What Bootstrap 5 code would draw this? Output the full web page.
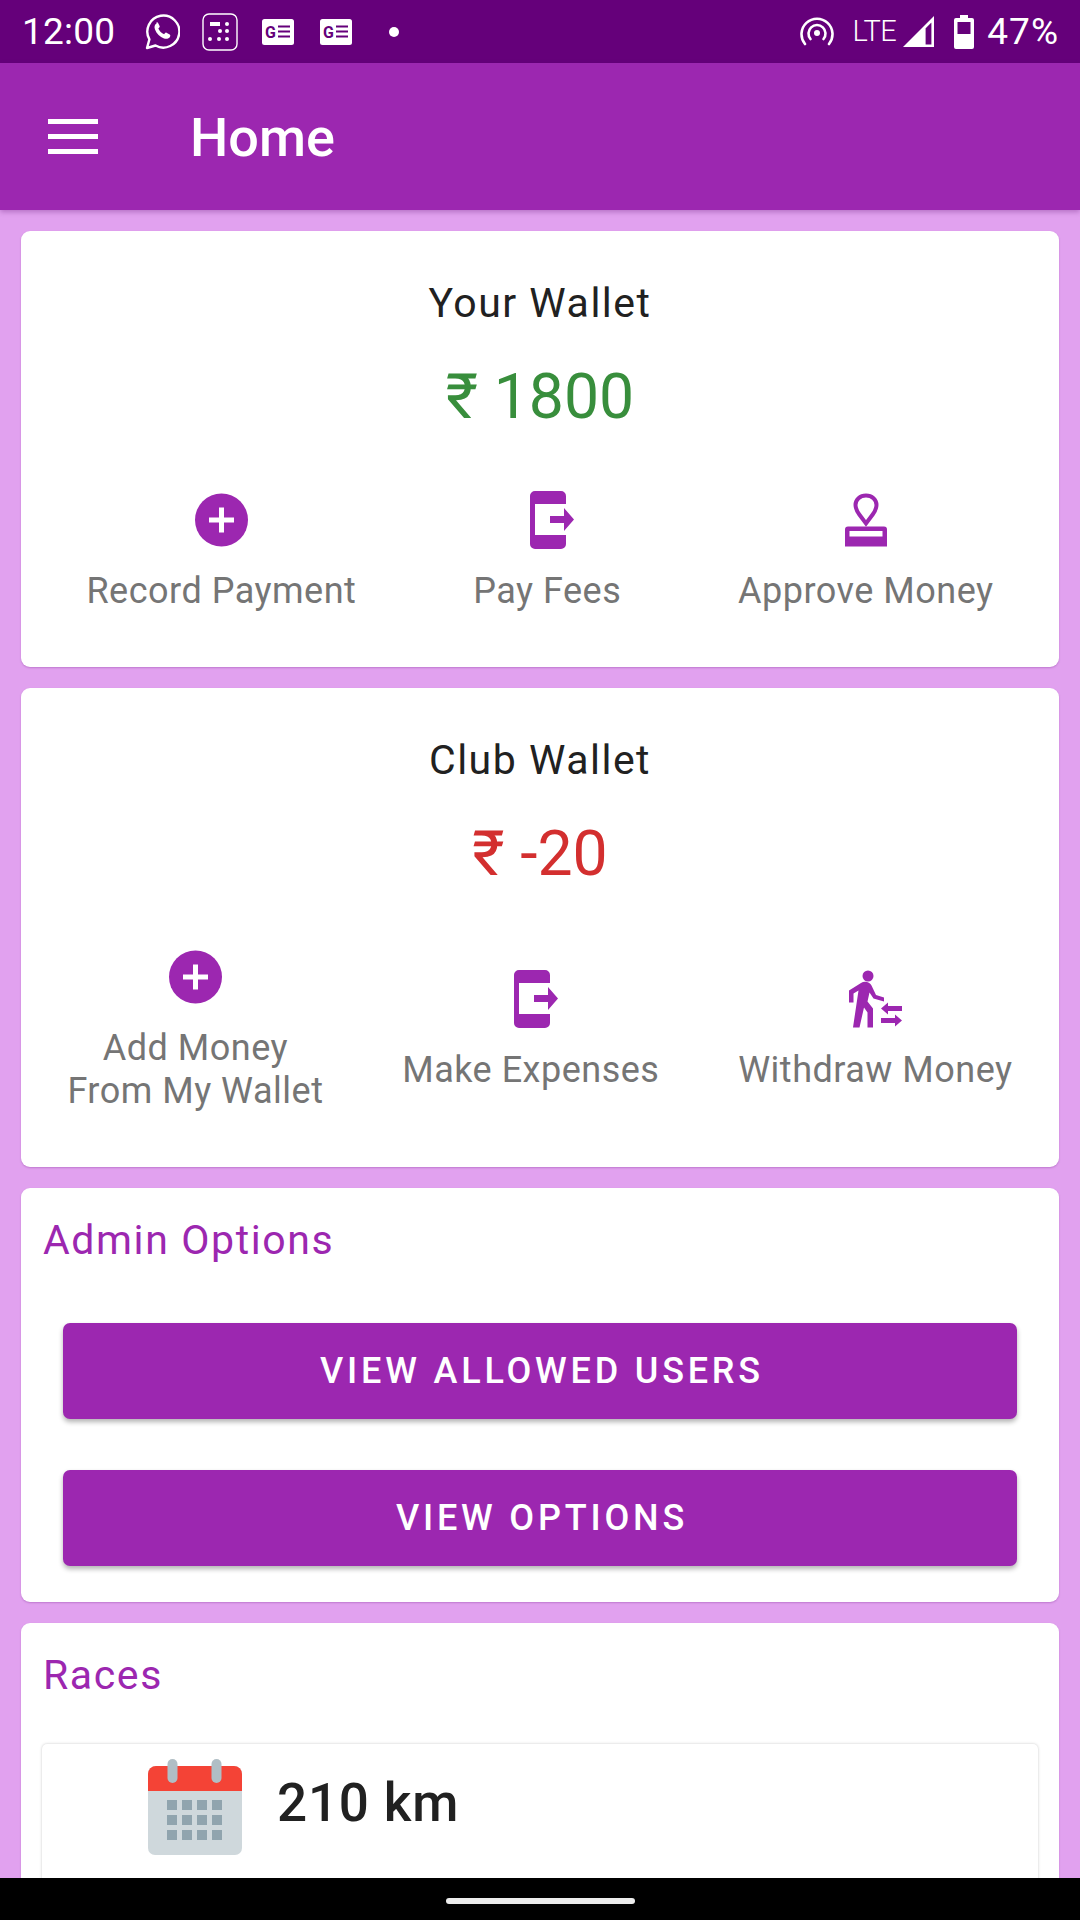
<!DOCTYPE html>
<html lang="en">
<head>
  <meta charset="UTF-8" />
  <meta name="viewport" content="width=device-width, initial-scale=1.0" />
  <title>Home</title>
  <link rel="stylesheet" href="https://cdn.jsdelivr.net/npm/bootstrap@5.3.0/dist/css/bootstrap.min.css">
  <style>
    body { font-family: Roboto, "Liberation Sans", sans-serif; background: #e1a1ef; overflow: hidden; }
    .phone { width: 1080px; height: 1920px; }
    .status-strip { height: 63px; background: #65007a; color: #fff; padding: 0 21px 0 22px; }
    .status-time { font-size: 37px; width: 122px; letter-spacing: .2px; line-height: 1; }
    .status-lte { font-size: 29px; letter-spacing: -.5px; font-weight: 300; line-height: 1; }
    .status-pct { font-size: 37px; letter-spacing: 1px; line-height: 1; }
    .app-strip { height: 147px; background: #9c27b0; color: #fff; padding-left: 48px; box-shadow: 0 2px 5px rgba(80,0,100,.3); position: relative; }
    .app-title { font-size: 54px; font-weight: 500; margin-left: 92px; line-height: 1; padding-top: 3px; }
    .burger { width: 50px; }
    .burger i { display: block; height: 5px; background: #fff; margin: 10px 0; }
    .content-scroll { padding: 21px 21px 0; gap: 21px; overflow: hidden; min-height: 0; }
    .panel { background: #fff; border-radius: 9px; box-shadow: 0 1px 2px rgba(90,0,110,.25); flex-shrink: 0; }
    .wallet-panel { text-align: center; }
    .wallet-title { font-size: 41px; letter-spacing: 1.5px; color: #212121; line-height: 44px; padding-top: 50px; }
    .wallet-sum { font-size: 62.5px; line-height: 70px; margin-top: 37px; }
    .sum-green { color: #388e3c; }
    .sum-red { color: #d32f2f; }
    .action-row { margin-top: 59px; padding: 0 7px 54px; }
    .action-label { font-size: 36px; letter-spacing: .5px; color: #757575; line-height: 43px; }
    .action-icon { height: 58px; display: block; margin: 0 auto 21px; }
    .panel-head { font-size: 41px; letter-spacing: 1.6px; color: #9c27b0; line-height: 44px; }
    .admin-panel { height: 414px; padding: 30px 42px 0 22px; }
    .purple-btn { background: #9c27b0; color: #fff; border: 0; height: 96px; border-radius: 7px; font-size: 36px; font-weight: 500; letter-spacing: 3.8px; width: 954px; margin-left: 20px; padding-left: 16px; box-shadow: 0 3px 5px rgba(0,0,0,.3); }
    .races-panel { padding: 30px 21px 0 21px; height: 420px; }
    .head-nudge { padding-left: 1px; }
    .race-item { margin-top: 47px; height: 320px; border-radius: 5px; box-shadow: 0 0 3px rgba(0,0,0,.22); padding: 15px 0 0 106px; }
    .race-dist { font-size: 53px; font-weight: 500; color: #212121; letter-spacing: .8px; margin-left: 35px; line-height: 1; margin-top: 18px; }
    .bottom-strip { height: 42px; background: #000; position: relative; z-index: 2; }
    .home-handle { width: 189px; height: 6px; border-radius: 3px; background: #ececec; margin-top: 20px; }
    .gap-dial { margin-left: 22px; }
    .gap-news { margin-left: 24px; }
    .gap-news2 { margin-left: 26px; }
    .gap-dot { margin-left: 37px; }
    .gap-hotspot { margin-right: 19px; }
    .gap-signal { margin: 0 19px 0 7px; }
    .gap-battery { margin-right: 13px; }
  </style>
</head>
<body>
  <div class="phone d-flex flex-column">
    <div class="status-strip d-flex align-items-center flex-shrink-0">
      <span class="status-time">12:00</span>
      <!-- whatsapp -->
      <svg width="36" height="38" viewBox="0 0 36 38" fill="none" stroke="#fff" stroke-width="2.4">
        <path d="M3 35l2.4-8.6A16 16 0 1 1 11.500 32.500z" stroke-linejoin="round"/>
        <path d="M12.500 10.500c-2 1-2.500 3.500-1.500 6 1.500 4 5 7.500 9 9 2.500.8 5 .3 6-1.700.5-1 .4-1.800-.3-2.300l-3.200-1.800c-.7-.3-1.200 0-1.600.6l-.8 1c-2.500-1-4.700-3.200-5.800-5.700l1-1c.5-.5.6-1 .3-1.600l-1.500-3c-.4-.8-1-.9-1.600-.5z" fill="#fff" stroke="none"/>
      </svg>
      <!-- dial pad -->
      <svg class="gap-dial" width="36" height="38" viewBox="0 0 36 38" fill="#fff">
        <rect x="1" y="1" width="34" height="36" rx="6" fill="none" stroke="#fff" stroke-width="1.400"/>
        <rect x="8" y="9" width="10" height="4"/>
        <circle cx="25" cy="11" r="2"/><circle cx="18" cy="18" r="2"/><circle cx="25" cy="18" r="2"/>
        <circle cx="8" cy="26" r="2"/><circle cx="17" cy="26" r="2"/><circle cx="25" cy="26" r="2"/>
      </svg>
      <!-- google news -->
      <svg class="gap-news" width="32" height="26" viewBox="0 0 32 26">
        <rect width="32" height="26" rx="2.500" fill="#fff"/>
        <text x="3" y="19" font-family="Roboto, sans-serif" font-size="16" font-weight="700" fill="#65007a">G</text>
        <path d="M16 7.500h12M16 12.500h12M16 17.500h12" stroke="#65007a" stroke-width="2"/>
      </svg>
      <svg class="gap-news2" width="32" height="26" viewBox="0 0 32 26">
        <rect width="32" height="26" rx="2.500" fill="#fff"/>
        <text x="3" y="19" font-family="Roboto, sans-serif" font-size="16" font-weight="700" fill="#65007a">G</text>
        <path d="M16 7.500h12M16 12.500h12M16 17.500h12" stroke="#65007a" stroke-width="2"/>
      </svg>
      <svg class="gap-dot" width="10" height="10" viewBox="0 0 10 10"><circle cx="5" cy="5" r="5" fill="#fff"/></svg>
      <span class="flex-grow-1"></span>
      <!-- hotspot -->
      <svg class="gap-hotspot" width="34" height="30" viewBox="0 0 34 30" fill="none" stroke="#fff" stroke-width="2.600" stroke-linecap="round">
        <path d="M5 27A15.500 15.500 0 1 1 29 27"/>
        <path d="M10.500 22A8.500 8.500 0 1 1 23.500 22"/>
        <circle cx="17" cy="16" r="3" fill="#fff" stroke="none"/>
      </svg>
      <span class="status-lte">LTE</span>
      <svg class="gap-signal" width="32" height="33" viewBox="0 0 32 33">
        <path d="M0 32L31 1v31z" fill="#fff"/>
        <path d="M22 13v17h7V6z" fill="#65007a" stroke="#fff" stroke-width="1.200"/>
      </svg>
      <svg class="gap-battery" width="20" height="34" viewBox="0 0 20 34">
        <path d="M6 0h8v3h4a2 2 0 0 1 2 2v27a2 2 0 0 1-2 2H2a2 2 0 0 1-2-2V5a2 2 0 0 1 2-2h4z" fill="#fff"/>
        <rect x="3.500" y="7" width="13" height="12" fill="#65007a"/>
      </svg>
      <span class="status-pct">47%</span>
    </div>

    <div class="app-strip d-flex align-items-center flex-shrink-0">
      <div class="burger"><i></i><i></i><i></i></div>
      <span class="app-title">Home</span>
    </div>

    <div class="content-scroll d-flex flex-column flex-grow-1">
      <div class="panel wallet-panel">
        <div class="wallet-title">Your Wallet</div>
        <div class="wallet-sum sum-green">₹ 1800</div>
        <div class="action-row d-flex justify-content-around align-items-center">
          <div class="action-label">
            <svg class="action-icon" width="53" height="53" viewBox="0 0 53 53"><circle cx="26.500" cy="26.500" r="26.500" fill="#9c27b0"/><path d="M24 14h5v10h10v5H29v10h-5V29H14v-5h10z" fill="#fff"/></svg>
            Record Payment
          </div>
          <div class="action-label">
            <svg class="action-icon" width="54" height="58" viewBox="-10 0 54 58"><path d="M5 0h26a5 5 0 0 1 5 5v8H5v31h31v9a5 5 0 0 1-5 5H5a5 5 0 0 1-5-5V5a5 5 0 0 1 5-5z" fill="#9c27b0"/><path d="M20 25h14v-8l10 11.500L34 40v-8H20z" fill="#9c27b0"/></svg>
            Pay Fees
          </div>
          <div class="action-label">
            <svg class="action-icon" width="42" height="53" viewBox="0 0 42 53"><path d="M21 2c6 0 10.500 4 10.500 9.500 0 3.500-2 7-3.800 9.500L21 30l-6.700-9c-1.800-2.500-3.800-6-3.800-9.500C10.500 6 15 2 21 2z" fill="none" stroke="#9c27b0" stroke-width="4"/><path d="M3 33h36a3 3 0 0 1 3 3v17H0V36a3 3 0 0 1 3-3z" fill="#9c27b0"/><rect x="4.500" y="37.500" width="33" height="5.500" fill="#fff"/></svg>
            Approve Money
          </div>
        </div>
      </div>

      <div class="panel wallet-panel">
        <div class="wallet-title">Club Wallet</div>
        <div class="wallet-sum sum-red">₹ -20</div>
        <div class="action-row d-flex justify-content-around align-items-center">
          <div class="action-label">
            <svg class="action-icon" width="53" height="53" viewBox="0 0 53 53"><circle cx="26.500" cy="26.500" r="26.500" fill="#9c27b0"/><path d="M24 14h5v10h10v5H29v10h-5V29H14v-5h10z" fill="#fff"/></svg>
            Add Money<br>From My Wallet
          </div>
          <div class="action-label">
            <svg class="action-icon" width="54" height="58" viewBox="-10 0 54 58"><path d="M5 0h26a5 5 0 0 1 5 5v8H5v31h31v9a5 5 0 0 1-5 5H5a5 5 0 0 1-5-5V5a5 5 0 0 1 5-5z" fill="#9c27b0"/><path d="M20 25h14v-8l10 11.500L34 40v-8H20z" fill="#9c27b0"/></svg>
            Make Expenses
          </div>
          <div class="action-label">
            <svg class="action-icon" width="53" height="57" viewBox="0 0 53 57" fill="#9c27b0"><circle cx="19" cy="5.500" r="5.500"/><path d="M12 12.500L0 20v12h4.500v-9l5-3L4 57h6.500L15 37l3.500 5v15H24V38l-5.500-7 2-9 4 6L35 31v-4l-8-2.500L22.500 15c-1.500-3-6.500-5-10.500-2.500z"/><path d="M53 35.500H39V32l-7 6 7 6v-3.500h14zM32 47.500h14V44l7 6-7 6v-3.500H32z"/></svg>
            Withdraw Money
          </div>
        </div>
      </div>

      <div class="panel admin-panel">
        <div class="panel-head">Admin Options</div>
        <button class="btn purple-btn d-block" style="margin-top:61px">VIEW ALLOWED USERS</button>
        <button class="btn purple-btn d-block" style="margin-top:51px">VIEW OPTIONS</button>
      </div>

      <div class="panel races-panel">
        <div class="panel-head head-nudge">Races</div>
        <div class="race-item d-flex align-items-start">
          <svg width="94" height="96" viewBox="0 0 94 96">
            <path d="M8 7h78a8 8 0 0 1 8 8v74a7 7 0 0 1-7 7H7a7 7 0 0 1-7-7V15a8 8 0 0 1 8-8z" fill="#cfd8dc"/>
            <path d="M8 7h78a8 8 0 0 1 8 8v17H0V15a8 8 0 0 1 8-8z" fill="#f44336"/>
            <rect x="19.500" y="0" width="10" height="24" rx="5" fill="#b0bec5"/>
            <rect x="63.500" y="0" width="10" height="24" rx="5" fill="#b0bec5"/>
            <g fill="#90a4ae">
              <rect x="19" y="41" width="10" height="10"/><rect x="34" y="41" width="10" height="10"/><rect x="49" y="41" width="10" height="10"/><rect x="64" y="41" width="10" height="10"/>
              <rect x="19" y="56" width="10" height="10"/><rect x="34" y="56" width="10" height="10"/><rect x="49" y="56" width="10" height="10"/><rect x="64" y="56" width="10" height="10"/>
              <rect x="19" y="71" width="10" height="10"/><rect x="34" y="71" width="10" height="10"/><rect x="49" y="71" width="10" height="10"/><rect x="64" y="71" width="10" height="10"/>
            </g>
          </svg>
          <span class="race-dist">210 km</span>
        </div>
      </div>
    </div>

    <div class="bottom-strip d-flex justify-content-center flex-shrink-0">
      <div class="home-handle"></div>
    </div>
  </div>
  <script src="https://cdn.jsdelivr.net/npm/bootstrap@5.3.0/dist/js/bootstrap.bundle.min.js"></script>
</body>
</html>
